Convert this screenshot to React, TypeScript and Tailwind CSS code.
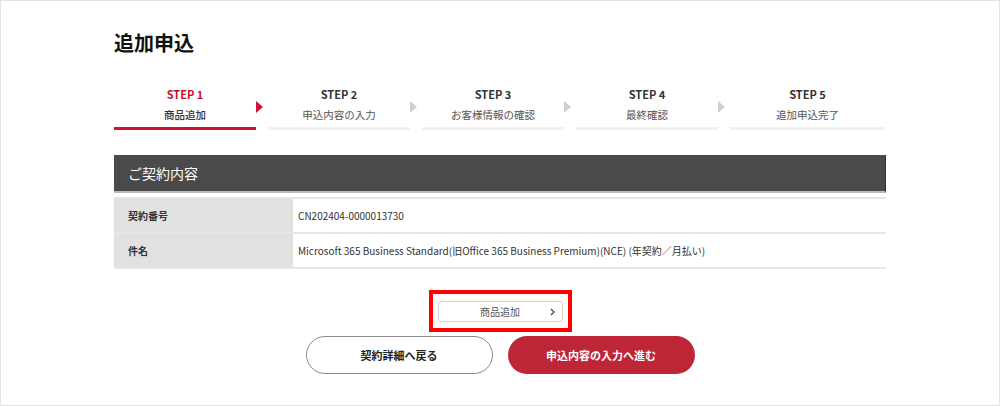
const steps = [
  { no: 'STEP 1', label: '商品追加' },
  { no: 'STEP 2', label: '申込内容の入力' },
  { no: 'STEP 3', label: 'お客様情報の確認' },
  { no: 'STEP 4', label: '最終確認' },
  { no: 'STEP 5', label: '追加申込完了' },
];

const contract = [
  { label: '契約番号', value: 'CN202404-0000013730' },
  {
    label: '件名',
    value: 'Microsoft 365 Business Standard(旧Office 365 Business Premium)(NCE) (年契約／月払い)',
  },
];

export default function App() {
  const current = 0;

  return (
    <div
      className="h-[406px] w-[1000px] overflow-hidden border border-[#e2e2e2] bg-white text-[#333]"
      style={{ fontFamily: '"Noto Sans CJK JP", "Noto Sans", sans-serif' }}
    >
      <div className="mx-auto w-[772px] pt-[27px]">
        <h1 className="text-[20px] font-bold leading-[30px] text-[#111]">追加申込</h1>

        {/* step indicator */}
        <ol className="mt-[28px] flex">
          {steps.map((s, i) => {
            const active = i === current;
            const last = i === steps.length - 1;
            return (
              <li key={s.no} className={last ? 'flex w-[155px]' : 'flex w-[154px]'}>
                <div className="flex flex-1 flex-col items-center">
                  <span
                    className={
                      active
                        ? 'text-[11px] font-bold leading-[16px] text-[#c8102e]'
                        : 'text-[11px] font-bold leading-[16px] text-[#333]'
                    }
                  >
                    {s.no}
                  </span>
                  <span
                    className={
                      active
                        ? 'mt-[5px] text-[10.5px] font-medium leading-[16px] text-[#333]'
                        : 'mt-[5px] text-[10.5px] leading-[16px] text-[#555]'
                    }
                  >
                    {s.label}
                  </span>
                  <div
                    className={
                      active
                        ? 'mt-[4px] h-[3px] w-full bg-[#d0103a]'
                        : 'mt-[4px] h-[3px] w-full bg-[#f2f2f2]'
                    }
                  />
                </div>
                {!last && (
                  <div className="w-[12px] pt-[15px]">
                    <div
                      className={
                        active
                          ? 'h-0 w-0 border-y-[6px] border-l-[7px] border-y-transparent border-l-[#d0103a]'
                          : 'h-0 w-0 border-y-[6px] border-l-[7px] border-y-transparent border-l-[#cfcfcf]'
                      }
                    />
                  </div>
                )}
              </li>
            );
          })}
        </ol>

        {/* contract section */}
        <section className="mt-[25px]">
          <h2 className="flex h-[38px] items-center border-b-2 border-r border-b-[#bbb] border-r-[#333] bg-[#4a4a4a] pl-[14px] text-[14px] leading-none text-white">
            ご契約内容
          </h2>
          <table className="mt-[4px] w-full border-collapse text-[10px]">
            <tbody>
              {contract.map((row) => (
                <tr key={row.label} className="h-[35px] border-y-2 border-[#e6e6e6]">
                  <th className="w-[179px] bg-[#e1e1e1] pl-[14px] text-left font-bold text-[#333]">
                    {row.label}
                  </th>
                  <td className="pl-[5px] text-[10px] text-[#333]">{row.value}</td>
                </tr>
              ))}
            </tbody>
          </table>
        </section>

        {/* actions */}
        <div className="mt-[21px] flex justify-center">
          <div className="border-4 border-[#ff0000] px-[5px] pt-[7px] pb-[6px]">
            <button
              type="button"
              className="relative flex h-[21px] w-[125px] items-center justify-center rounded-[3px] border border-[#d2d2d2] bg-white text-[10px] text-[#555]"
            >
              商品追加
              <svg
                className="absolute right-[7px] top-1/2 -translate-y-1/2"
                width="5"
                height="8"
                viewBox="0 0 5 8"
                fill="none"
              >
                <path d="M1 1l3 3-3 3" stroke="#444" strokeWidth="1.2" />
              </svg>
            </button>
          </div>
        </div>
        <div className="mt-[4px] flex justify-center gap-[15px]">
          <button
            type="button"
            className="h-[38px] w-[187px] rounded-full border border-[#8c8c8c] bg-white text-[11px] font-bold text-[#222]"
          >
            契約詳細へ戻る
          </button>
          <button
            type="button"
            className="h-[38px] w-[187px] rounded-full bg-[#be2637] text-[11px] font-bold text-white"
          >
            申込内容の入力へ進む
          </button>
        </div>
      </div>
    </div>
  );
}
